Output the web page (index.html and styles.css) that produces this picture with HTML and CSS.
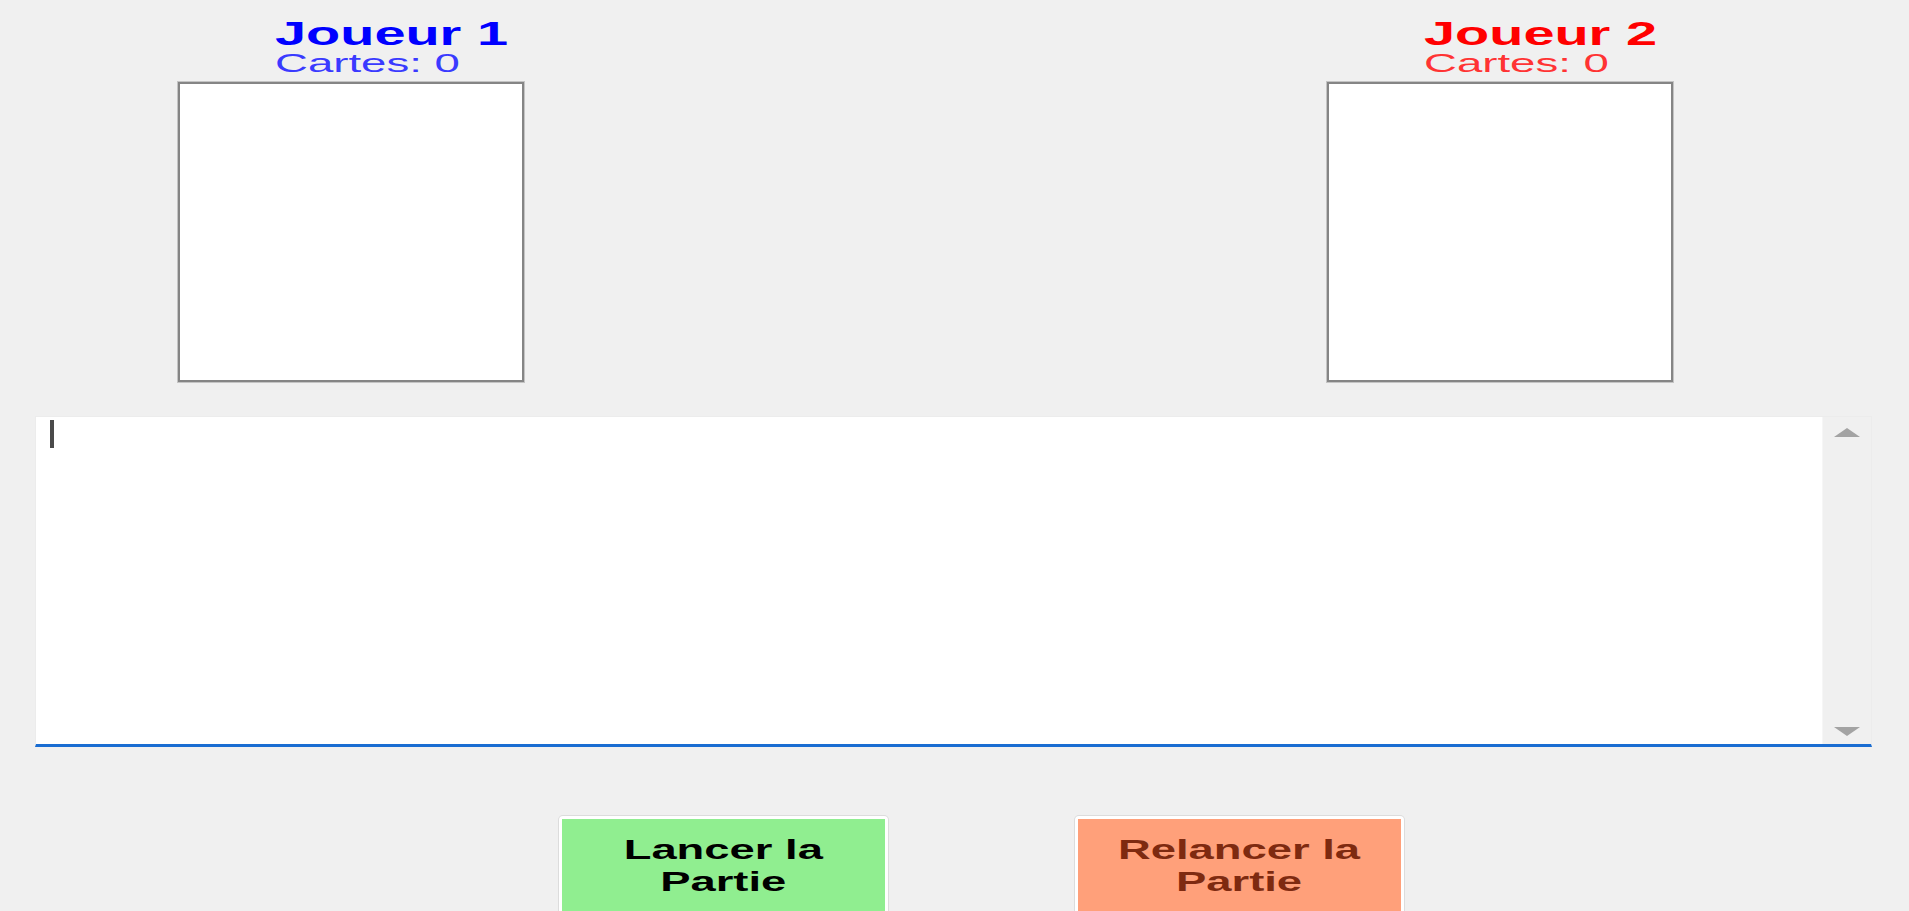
FILE: index.html
```html
<!DOCTYPE html>
<html lang="fr">
<head>
<meta charset="utf-8">
<title>Bataille</title>
<link rel="stylesheet" href="styles.css">
</head>
<body>
<div class="page">
  <div class="players">
    <div class="player p1">
      <div class="head">
        <div class="name"><span class="stretch">Joueur 1</span></div>
        <div class="count"><span class="stretch">Cartes: 0</span></div>
      </div>
      <div class="card"></div>
    </div>
    <div class="player p2">
      <div class="head">
        <div class="name"><span class="stretch">Joueur 2</span></div>
        <div class="count"><span class="stretch">Cartes: 0</span></div>
      </div>
      <div class="card"></div>
    </div>
  </div>

  <div class="log">
    <div class="log-text"><span class="caret"></span></div>
    <div class="log-scroll">
      <span class="arrow up"></span>
      <span class="arrow down"></span>
    </div>
  </div>

  <div class="actions">
    <div class="btn-wrap"><div class="btn start"><span class="btn-label">Lancer la<br>Partie</span></div></div>
    <div class="btn-wrap"><div class="btn restart"><span class="btn-label">Relancer la<br>Partie</span></div></div>
  </div>
</div>
</body>
</html>
```

FILE: styles.css
```css
html {
  overflow: hidden;
}

body {
  margin: 0;
  background: #f0f0f0;
  font-family: "Liberation Sans", Arial, sans-serif;
}

.page {
  padding-top: 18px;
}

.players {
  display: flex;
  padding-left: 178px;
  gap: 803px;
}

.player {
  width: 346px;
  display: flex;
  flex-direction: column;
}

.head {
  padding-left: 97px;
  margin-bottom: 6px;
}

.stretch {
  display: inline-block;
  transform: scaleX(1.72);
  transform-origin: left center;
  white-space: nowrap;
}

.name {
  font-size: 32.5px;
  font-weight: bold;
  line-height: 32px;
  height: 32px;
}

.count {
  font-size: 26.5px;
  line-height: 26px;
  height: 26px;
}

.p1 .name { color: #0000ff; }
.p1 .count { color: #3a3aff; }
.p2 .name { color: #ff0000; }
.p2 .count { color: #ff3333; }

.card {
  width: 342px;
  height: 296px;
  background: #ffffff;
  border: 2px solid #858585;
  box-shadow: 0 0 0 1px #c4c4c4;
}

.log {
  margin: 34px 37px 0 35px;
  height: 327px;
  display: flex;
  background: #ffffff;
  border: 1px solid #ececec;
  border-bottom: 3px solid #1a6dd2;
  box-sizing: content-box;
}

.log-text {
  flex: 1;
  padding: 3px 0 0 14px;
}

.caret {
  display: block;
  width: 4px;
  height: 28px;
  background: #4a4a4a;
}

.log-scroll {
  width: 48px;
  background: #f0f0f0;
  border-left: 1px solid #f6f6f6;
  display: flex;
  flex-direction: column;
  justify-content: space-between;
  align-items: center;
  padding: 11px 0 8px;
}

.arrow {
  display: block;
  width: 0;
  height: 0;
  border-left: 13px solid transparent;
  border-right: 13px solid transparent;
}

.arrow.up {
  border-bottom: 9px solid #a3a3a3;
}

.arrow.down {
  border-top: 9px solid #a3a3a3;
}

.actions {
  display: flex;
  padding-left: 559px;
  gap: 187px;
  margin-top: 69px;
}

.btn-wrap {
  border: 3px solid #ffffff;
  border-radius: 4px;
  box-shadow: 0 0 0 1px #dcdcdc;
  background: #ffffff;
}

.btn {
  width: 323px;
  height: 96px;
  box-sizing: border-box;
  padding-top: 15px;
  text-align: center;
  font-size: 27px;
  font-weight: bold;
  line-height: 32px;
}

.btn-label {
  display: inline-block;
  transform: scaleX(1.68);
  transform-origin: center center;
}

.start {
  background: #90ee90;
  color: #000000;
}

.restart {
  background: #ffa07a;
  color: #7e2a10;
}
```
